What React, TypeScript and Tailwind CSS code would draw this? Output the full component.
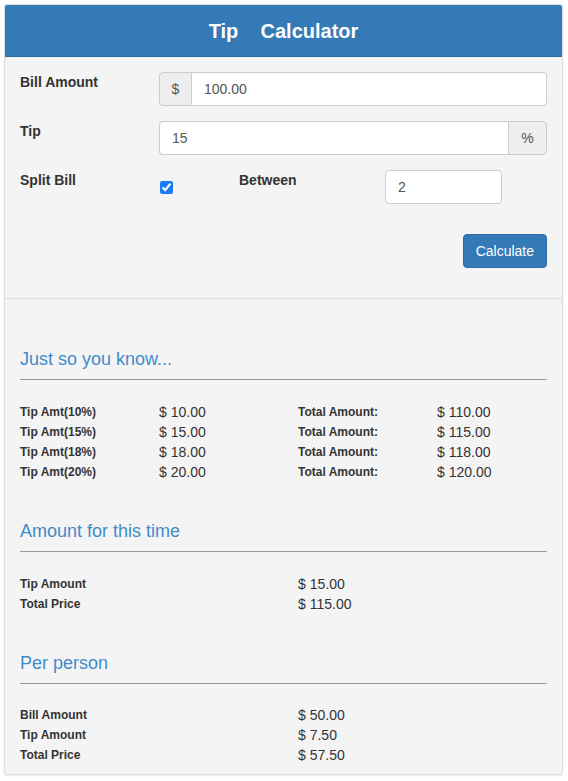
import React from "react";

const font = { fontFamily: '"Liberation Sans", Arial, Helvetica, sans-serif' };

const quick = [
  { label: "Tip Amt(10%)", tip: "$ 10.00", total: "$ 110.00" },
  { label: "Tip Amt(15%)", tip: "$ 15.00", total: "$ 115.00" },
  { label: "Tip Amt(18%)", tip: "$ 18.00", total: "$ 118.00" },
  { label: "Tip Amt(20%)", tip: "$ 20.00", total: "$ 120.00" },
];

function SectionTitle({ children }: { children: React.ReactNode }) {
  return (
    <>
      <h3 className="text-[18px] leading-[20px] h-[20px] text-[#428bca] font-normal">{children}</h3>
      <div className="mt-[10px] h-px bg-[#999]" />
    </>
  );
}

function Row({ label, value }: { label: string; value: string }) {
  return (
    <div className="flex h-[20px] items-center">
      <div className="w-[278px] text-[12px] font-bold text-[#333]">{label}</div>
      <div className="text-[14px] text-[#333]">{value}</div>
    </div>
  );
}

export default function App() {
  return (
    <div className="min-h-screen bg-white pt-[4px] pl-[4px]" style={font}>
      <div className="w-[559px] bg-[#f4f4f4] border border-[#dcdcdc] rounded-[3px] shadow-[0_1px_2px_rgba(0,0,0,0.08)] overflow-hidden">
        {/* Header */}
        <div className="h-[52px] bg-[#337ab7] border-b border-[#2e6da4] flex items-center justify-center">
          <h1 className="text-[20px] font-bold text-white whitespace-pre">Tip    Calculator</h1>
        </div>

        {/* Form */}
        <div className="px-[15px] pt-[15px] pb-[30px] border-b border-[#dddddd]">
          <div className="flex items-start">
            <label className="w-[139px] text-[14px] leading-[20px] font-bold text-[#333]">Bill Amount</label>
            <div className="flex flex-1 h-[34px]">
              <span className="w-[33px] flex items-center justify-center bg-[#eeeeee] border border-[#cccccc] rounded-l-[4px] text-[14px] text-[#555]">
                $
              </span>
              <input
                className="flex-1 min-w-0 border border-l-0 border-[#cccccc] rounded-r-[4px] bg-white px-[12px] text-[14px] text-[#555] outline-none"
                defaultValue="100.00"
              />
            </div>
          </div>

          <div className="flex items-start mt-[15px]">
            <label className="w-[139px] text-[14px] leading-[20px] font-bold text-[#333]">Tip</label>
            <div className="flex flex-1 h-[34px]">
              <input
                className="flex-1 min-w-0 border border-r-0 border-[#cccccc] rounded-l-[4px] bg-white px-[12px] text-[14px] text-[#555] outline-none"
                defaultValue="15"
              />
              <span className="w-[39px] flex items-center justify-center bg-[#eeeeee] border border-[#cccccc] rounded-r-[4px] text-[14px] text-[#555]">
                %
              </span>
            </div>
          </div>

          <div className="flex items-start mt-[15px]">
            <label className="w-[139px] text-[14px] leading-[20px] font-bold text-[#333]">Split Bill</label>
            <div className="w-[80px] pt-[11px] pl-[1px]">
              <input type="checkbox" defaultChecked className="block w-[13px] h-[13px] m-0 accent-[#1a7cf5]" />
            </div>
            <label className="w-[146px] text-[14px] leading-[20px] font-bold text-[#333]">Between</label>
            <input
              className="w-[117px] h-[34px] border border-[#cccccc] rounded-[4px] bg-white px-[12px] text-[14px] text-[#555] outline-none"
              defaultValue="2"
            />
          </div>

          <div className="flex justify-end mt-[30px]">
            <button className="h-[34px] px-[12px] bg-[#337ab7] border border-[#2e6da4] rounded-[4px] text-white text-[14px]">
              Calculate
            </button>
          </div>
        </div>

        {/* Results */}
        <div className="px-[15px] pt-[50px] pb-[9px]">
          <SectionTitle>Just so you know...</SectionTitle>
          <div className="mt-[22px]">
            {quick.map((q) => (
              <div key={q.label} className="flex h-[20px] items-center">
                <div className="w-[139px] text-[12px] font-bold text-[#333]">{q.label}</div>
                <div className="w-[139px] text-[14px] text-[#333]">{q.tip}</div>
                <div className="w-[139px] text-[12px] font-bold text-[#333]">Total Amount:</div>
                <div className="text-[14px] text-[#333]">{q.total}</div>
              </div>
            ))}
          </div>

          <div className="mt-[39px]">
            <SectionTitle>Amount for this time</SectionTitle>
            <div className="mt-[22px]">
              <Row label="Tip Amount" value="$ 15.00" />
              <Row label="Total Price" value="$ 115.00" />
            </div>
          </div>

          <div className="mt-[39px]">
            <SectionTitle>Per person</SectionTitle>
            <div className="mt-[21px]">
              <Row label="Bill Amount" value="$ 50.00" />
              <Row label="Tip Amount" value="$ 7.50" />
              <Row label="Total Price" value="$ 57.50" />
            </div>
          </div>
        </div>
      </div>
    </div>
  );
}
